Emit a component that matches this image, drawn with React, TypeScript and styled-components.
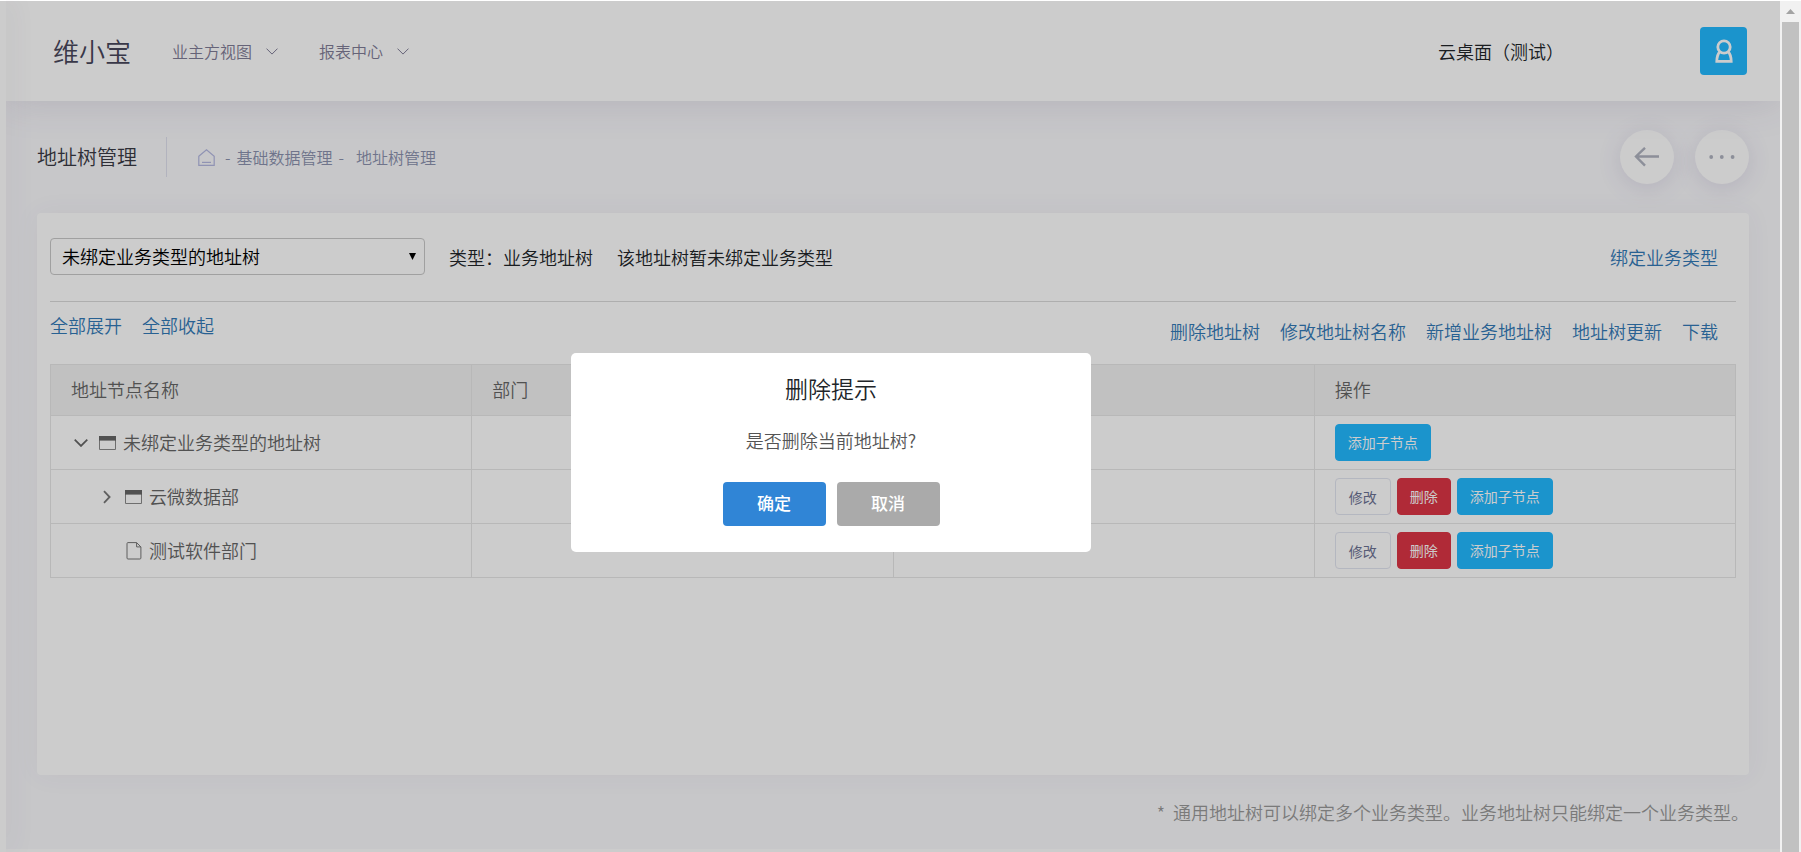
import React from 'react';
import styled, { createGlobalStyle, css } from 'styled-components';

const GlobalStyle = createGlobalStyle`
  *, *::before, *::after { box-sizing: border-box; }
  body {
    margin: 0;
    background: #fff;
    color: #212529;
    font: 350 18px/26px "Noto Sans CJK SC", sans-serif;
  }
  button, select { font: inherit; }
  a { text-decoration: none; }
  h1, h2, p { margin: 0; font-weight: inherit; }
`;

const Page = styled.div`
  display: grid;
  grid-template-columns: 6px minmax(0, 1fr) 21px;
  min-height: 100vh;
`;

const AsideEdge = styled.aside`
  position: relative;
  z-index: 2;
  background: #fff;
  box-shadow: 0 0 28px rgba(82, 63, 105, 0.16);
`;

const Body = styled.div`
  display: flex;
  flex-direction: column;
  min-height: 100vh;
  border-top: 1px solid #fff;
  background: #f9f9fc;
  overflow: hidden;
`;

const Header = styled.header`
  display: flex;
  align-items: center;
  height: 100px;
  flex: none;
  padding: 0 33px 0 47px;
  background: #fff;
  position: relative;
  box-shadow: 0 0 40px rgba(82, 63, 105, 0.15);
`;

const Logo = styled.h1`
  font-size: 26px;
  line-height: 36px;
  color: #48465b;
`;

const Nav = styled.nav`
  display: flex;
  gap: 41px;
  margin-left: 41px;
  flex: 1;
`;

const NavLink = styled.a`
  display: flex;
  align-items: center;
  gap: 14px;
  font-size: 16px;
  color: #7f7c96;
`;

const UserName = styled.span`
  margin-right: 136px;
`;

const Avatar = styled.button`
  display: grid;
  place-items: center;
  width: 47px;
  height: 48px;
  padding: 0;
  border: 0;
  border-radius: 4px;
  background: #22b9ff;
  color: #fff;
`;

const SubHeader = styled.div`
  display: flex;
  align-items: center;
  height: 112px;
  padding: 0 31px;
`;

const PageTitle = styled.h2`
  padding-right: 29px;
  margin-right: 31px;
  border-right: 1px solid #dfe0ee;
  font-size: 20px;
  line-height: 40px;
  color: #3a3a44;
`;

const Crumbs = styled.nav`
  display: flex;
  align-items: center;
  flex: 1;
  gap: 6px;
  font-size: 16px;
  color: #8b92ae;
`;

const CrumbLink = styled.a`
  display: flex;
  color: inherit;

  &:first-child { margin-right: 4px; color: #b4b8e0; }
  &:last-child { margin-left: 6px; }
`;

const RoundButton = styled.button`
  display: grid;
  place-items: center;
  width: 54px;
  height: 54px;
  margin-left: 21px;
  padding: 0;
  border: 0;
  border-radius: 50%;
  background: #fff;
  color: #b0b3c0;
  box-shadow: 0 4px 24px rgba(82, 63, 135, 0.14);
`;

const Card = styled.main`
  min-height: 562px;
  margin: 0 31px;
  padding: 25px 13px;
  border-radius: 4px;
  background: #fff;
  box-shadow: 0 0 26px rgba(82, 63, 105, 0.06);
`;

const FilterBar = styled.div`
  display: flex;
  align-items: center;
  gap: 24px;
  padding: 0 18px 26px 0;
  border-bottom: 1px solid #dadada;
`;

const SelectBox = styled.div`
  display: grid;
  width: 375px;
  align-items: center;

  > * { grid-area: 1 / 1; }
  > svg { justify-self: end; margin-right: 9px; pointer-events: none; }
`;

const TreeSelect = styled.select`
  appearance: none;
  width: 100%;
  height: 37px;
  padding: 0 11px 2px;
  border: 1px solid #c8c8c8;
  border-radius: 4px;
  background: #fff;
  color: #000;
`;

const ActionLink = styled.a`
  color: #337ab7;
`;

const BindLink = styled(ActionLink)`
  margin-left: auto;
`;

const ActionBar = styled.div`
  display: flex;
  justify-content: space-between;
  height: 62px;
  padding: 10px 18px 0 0;
`;

const LinkGroup = styled.div<{ $lowered?: boolean }>`
  display: flex;
  gap: 20px;
  padding-top: ${({ $lowered }) => ($lowered ? '6px' : '0')};
`;

const TreeTable = styled.table`
  width: 100%;
  table-layout: fixed;
  border-collapse: collapse;
  color: #666;
`;

const cell = css`
  padding: 0 20px;
  border: 1px solid #e6e6e6;
  text-align: left;
  font-weight: inherit;
`;

const HeadCell = styled.th`
  ${cell}
  height: 51px;
  padding-bottom: 2px;
  background: #f2f2f2;
`;

const Cell = styled.td`
  ${cell}
  height: 54px;
`;

const Node = styled.div<{ $depth: number }>`
  display: flex;
  align-items: center;
  padding-left: ${({ $depth }) => $depth * 26}px;
`;

const NodeName = styled.span`
  padding-bottom: 2px;
`;

const Toggle = styled.span`
  display: grid;
  place-items: center;
  width: 20px;
  margin-right: 7px;
`;

const NodeIcon = styled.span`
  display: grid;
  place-items: center;
  width: 19px;
  margin-right: 6px;
`;

const Actions = styled.div`
  display: flex;
  gap: 6px;
`;

const tones = {
  primary: css`padding: 0 12px 2px; background: #22b9ff; border-color: #22b9ff; color: #fff;`,
  danger: css`padding: 0 12px 2px; background: #dc3545; border-color: #dc3545; color: #fff;`,
  plain: css`padding: 0 13px; background: #fff; border-color: #e2e5f0; color: #6c7293;`,
};

const RowButton = styled.button<{ $tone: keyof typeof tones }>`
  height: 37px;
  border: 1px solid;
  border-radius: 4px;
  font-size: 14px;
  font-weight: 400;
  line-height: 20px;
  ${({ $tone }) => tones[$tone]}
`;

const Note = styled.p`
  margin: 24px 31px 24px;
  text-align: right;
  color: #999;
`;

const Footer = styled.footer`
  flex: 1;
  background: #fff;
`;

const ScrollTrack = styled.div`
  display: flex;
  flex-direction: column;
  align-items: center;
  border-top: 1px solid #fff;
  background: #f1f1f1;
`;

const ScrollArrow = styled.div`
  display: grid;
  place-items: center;
  height: 21px;
  color: #a3a3a3;
`;

const ScrollThumb = styled.div`
  flex: 1;
  width: 17px;
  background: #c1c1c1;
`;

const Backdrop = styled.div`
  position: fixed;
  inset: 1px 21px 0 0;
  z-index: 10;
  display: flex;
  justify-content: center;
  align-items: flex-start;
  padding: 352px 118px 0 0;
  background: rgba(0, 0, 0, 0.2);
`;

const Dialog = styled.div`
  display: flex;
  flex-direction: column;
  align-items: center;
  width: 520px;
  padding: 19px 20px 26px;
  border-radius: 5px;
  background: #fff;
`;

const DialogTitle = styled.h2`
  font-size: 23px;
  line-height: 32px;
  color: #212529;
`;

const DialogText = styled.p`
  margin-top: 23px;
  color: #545454;
`;

const DialogActions = styled.div`
  display: flex;
  gap: 11px;
  margin-top: 29px;
`;

const DialogButton = styled.button<{ $color: string }>`
  width: 103px;
  height: 44px;
  padding: 0 0 2px;
  border: 0;
  border-radius: 4px;
  background: ${({ $color }) => $color};
  color: #fff;
  font-size: 17px;
  font-weight: 500;
`;

const ChevronDown = ({ size = 12, stroke = 1 }: { size?: number; stroke?: number }) => (
  <svg width={size} height={size / 2 + 1} viewBox="0 0 12 7" fill="none" stroke="currentColor" strokeWidth={stroke}>
    <path d="M.5 .6 6 6.1 11.5 .6" />
  </svg>
);

const ChevronRight = () => (
  <svg width="8" height="14" viewBox="0 0 8 14" fill="none" stroke="#777" strokeWidth="1.8">
    <path d="M1 1.2 6.6 7 1 12.8" />
  </svg>
);

const WindowIcon = () => (
  <svg width="18" height="14" viewBox="0 0 18 14">
    <path d="M.5 .5h16v13H.5z" fill="none" stroke="#8a8a8a" />
    <path d="M0 0h17v4.6H0z" fill="#666" />
  </svg>
);

const FileIcon = () => (
  <svg width="16" height="18" viewBox="0 0 16 18" fill="none" stroke="#777">
    <path d="M2 .6h8.6l4.3 4.3V16a1 1 0 0 1-1 1H2a1 1 0 0 1-1-1V1.6a1 1 0 0 1 1-1z" />
    <path d="M10.6 .6v4.3h4.3" />
  </svg>
);

const HomeIcon = () => (
  <svg width="17" height="17" viewBox="0 0 17 17" fill="none" stroke="currentColor" strokeWidth="1.2">
    <path d="M.8 7.2 8.5 .8l7.7 6.4v9.2H.8z" />
    <path d="M4 13.4h9" />
  </svg>
);

const UserIcon = () => (
  <svg width="18" height="26" viewBox="0 0 18 26" fill="none" stroke="currentColor" strokeWidth="2.8">
    <circle cx="9" cy="9" r="6.2" />
    <path d="M4.8 13.8C2.6 16 1.9 19 1.8 23.4h14.4c-.1-4.4-.8-7.4-3-9.6" />
  </svg>
);

const BackIcon = () => (
  <svg width="26" height="20" viewBox="0 0 26 20" fill="none" stroke="currentColor" strokeWidth="2.4">
    <path d="M25 9.5H2M11 .8 2 9.5l9 9.2" />
  </svg>
);

const MoreIcon = () => (
  <svg width="26" height="4" viewBox="0 0 26 4" fill="currentColor">
    <circle cx="2.2" cy="2" r="1.9" />
    <circle cx="12.8" cy="2" r="1.9" />
    <circle cx="23.6" cy="2" r="1.9" />
  </svg>
);

const SelectArrow = () => (
  <svg width="7" height="7" viewBox="0 0 7 7"><path d="M0 0h7L3.5 7z" /></svg>
);

type TreeNode = { name: string; depth: number; kind: 'open' | 'closed' | 'leaf' };

const nodes: TreeNode[] = [
  { name: '未绑定业务类型的地址树', depth: 0, kind: 'open' },
  { name: '云微数据部', depth: 1, kind: 'closed' },
  { name: '测试软件部门', depth: 1, kind: 'leaf' },
];

const treeLinks = ['删除地址树', '修改地址树名称', '新增业务地址树', '地址树更新', '下载'];

const TreeRow = ({ node }: { node: TreeNode }) => (
  <tr>
    <Cell>
      <Node $depth={node.depth}>
        <Toggle>
          {node.kind === 'open' && <ChevronDown size={14} stroke={1.5} />}
          {node.kind === 'closed' && <ChevronRight />}
        </Toggle>
        <NodeIcon>{node.kind === 'leaf' ? <FileIcon /> : <WindowIcon />}</NodeIcon>
        <NodeName>{node.name}</NodeName>
      </Node>
    </Cell>
    <Cell />
    <Cell />
    <Cell>
      <Actions>
        {node.depth > 0 && (
          <>
            <RowButton $tone="plain">修改</RowButton>
            <RowButton $tone="danger">删除</RowButton>
          </>
        )}
        <RowButton $tone="primary">添加子节点</RowButton>
      </Actions>
    </Cell>
  </tr>
);

export default function App() {
  return (
    <>
      <GlobalStyle />
      <Page>
        <AsideEdge />
        <Body>
          <Header>
            <Logo>维小宝</Logo>
            <Nav>
              <NavLink href="#">业主方视图<ChevronDown /></NavLink>
              <NavLink href="#">报表中心<ChevronDown /></NavLink>
            </Nav>
            <UserName>云桌面（测试）</UserName>
            <Avatar aria-label="用户"><UserIcon /></Avatar>
          </Header>
          <SubHeader>
            <PageTitle>地址树管理</PageTitle>
            <Crumbs>
              <CrumbLink href="#" aria-label="首页"><HomeIcon /></CrumbLink>
              <span>-</span>
              <CrumbLink href="#">基础数据管理</CrumbLink>
              <span>-</span>
              <CrumbLink href="#">地址树管理</CrumbLink>
            </Crumbs>
            <RoundButton aria-label="返回"><BackIcon /></RoundButton>
            <RoundButton aria-label="更多"><MoreIcon /></RoundButton>
          </SubHeader>
          <Card>
            <FilterBar>
              <SelectBox>
                <TreeSelect aria-label="地址树" defaultValue="unbound">
                  <option value="unbound">未绑定业务类型的地址树</option>
                </TreeSelect>
                <SelectArrow />
              </SelectBox>
              <span>类型：业务地址树</span>
              <span>该地址树暂未绑定业务类型</span>
              <BindLink href="#">绑定业务类型</BindLink>
            </FilterBar>
            <ActionBar>
              <LinkGroup>
                <ActionLink href="#">全部展开</ActionLink>
                <ActionLink href="#">全部收起</ActionLink>
              </LinkGroup>
              <LinkGroup $lowered>
                {treeLinks.map((label) => (
                  <ActionLink href="#" key={label}>{label}</ActionLink>
                ))}
              </LinkGroup>
            </ActionBar>
            <TreeTable>
              <thead>
                <tr>
                  <HeadCell>地址节点名称</HeadCell>
                  <HeadCell>部门</HeadCell>
                  <HeadCell />
                  <HeadCell>操作</HeadCell>
                </tr>
              </thead>
              <tbody>
                {nodes.map((node) => <TreeRow key={node.name} node={node} />)}
              </tbody>
            </TreeTable>
          </Card>
          <Note>*&nbsp; 通用地址树可以绑定多个业务类型。业务地址树只能绑定一个业务类型。</Note>
          <Footer />
        </Body>
        <ScrollTrack aria-hidden="true">
          <ScrollArrow>
            <svg width="9" height="5" viewBox="0 0 9 5" fill="currentColor"><path d="M0 5 4.5 0 9 5z" /></svg>
          </ScrollArrow>
          <ScrollThumb />
        </ScrollTrack>
      </Page>
      <Backdrop>
        <Dialog role="dialog" aria-modal="true" aria-labelledby="dialog-title">
          <DialogTitle id="dialog-title">删除提示</DialogTitle>
          <DialogText>是否删除当前地址树?</DialogText>
          <DialogActions>
            <DialogButton $color="#3085d6">确定</DialogButton>
            <DialogButton $color="#aaa">取消</DialogButton>
          </DialogActions>
        </Dialog>
      </Backdrop>
    </>
  );
}
